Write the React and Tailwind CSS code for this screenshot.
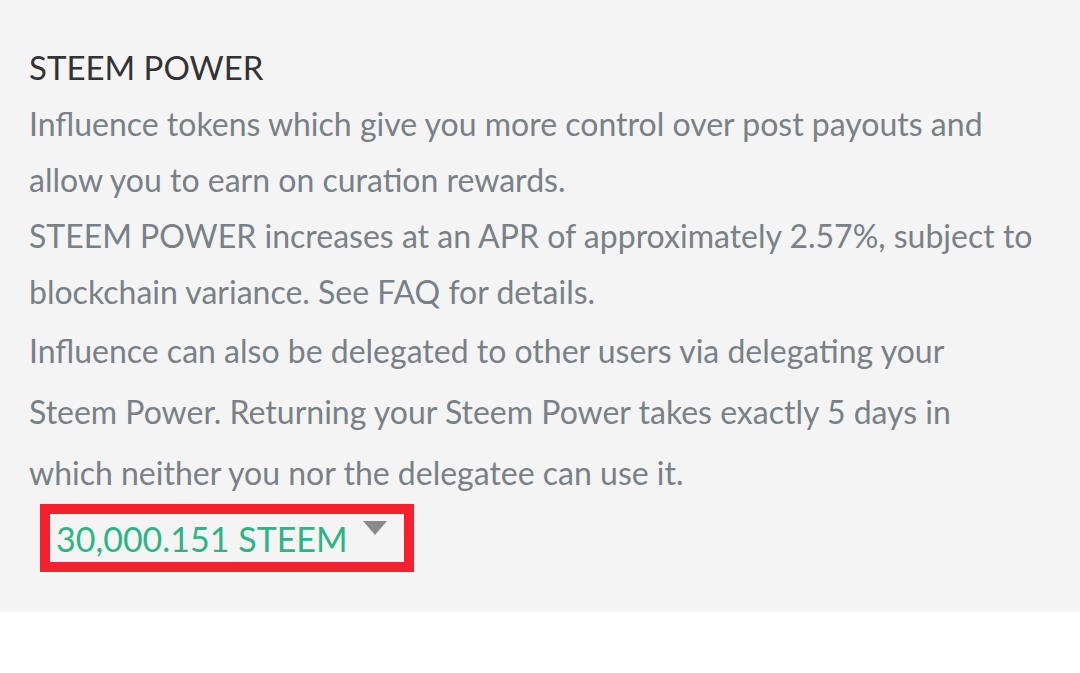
export default function App() {
  return (
    <div className="min-h-[673px] bg-white" style={{ fontFamily: "Lato, 'Noto Sans', sans-serif" }}>
      <div className="bg-[#f4f4f4] pl-[29px] pr-[45px] pt-[38px] pb-[40px]">
        <h2 className="text-[33px] leading-[58px] text-[#333333] font-normal">STEEM POWER</h2>
        <p className="text-[32px] leading-[56px] text-[#788187]">
          Influence tokens which give you more control over post payouts and allow you to earn on curation rewards.
        </p>
        <p className="text-[32px] leading-[56px] text-[#788187]">
          STEEM POWER increases at an APR of approximately 2.57%, subject to blockchain variance. See FAQ for details.
        </p>
        <p className="text-[32px] leading-[61px] text-[#788187]">
          Influence can also be delegated to other users via delegating your Steem Power. Returning your Steem Power takes exactly 5 days in which neither you nor the delegatee can use it.
        </p>
        <div className="ml-[11px] mt-[1px] inline-flex items-center border-[10px] border-[#f5202e] pl-[6px] pr-[17px] h-[68px]">
          <span className="text-[34px] text-[#2db485]">30,000.151 STEEM</span>
          <span className="ml-[15px] -mt-[20px] w-0 h-0 border-l-[12px] border-r-[12px] border-t-[14px] border-l-transparent border-r-transparent border-t-[#8a8a8a]" />
        </div>
      </div>
    </div>
  );
}
